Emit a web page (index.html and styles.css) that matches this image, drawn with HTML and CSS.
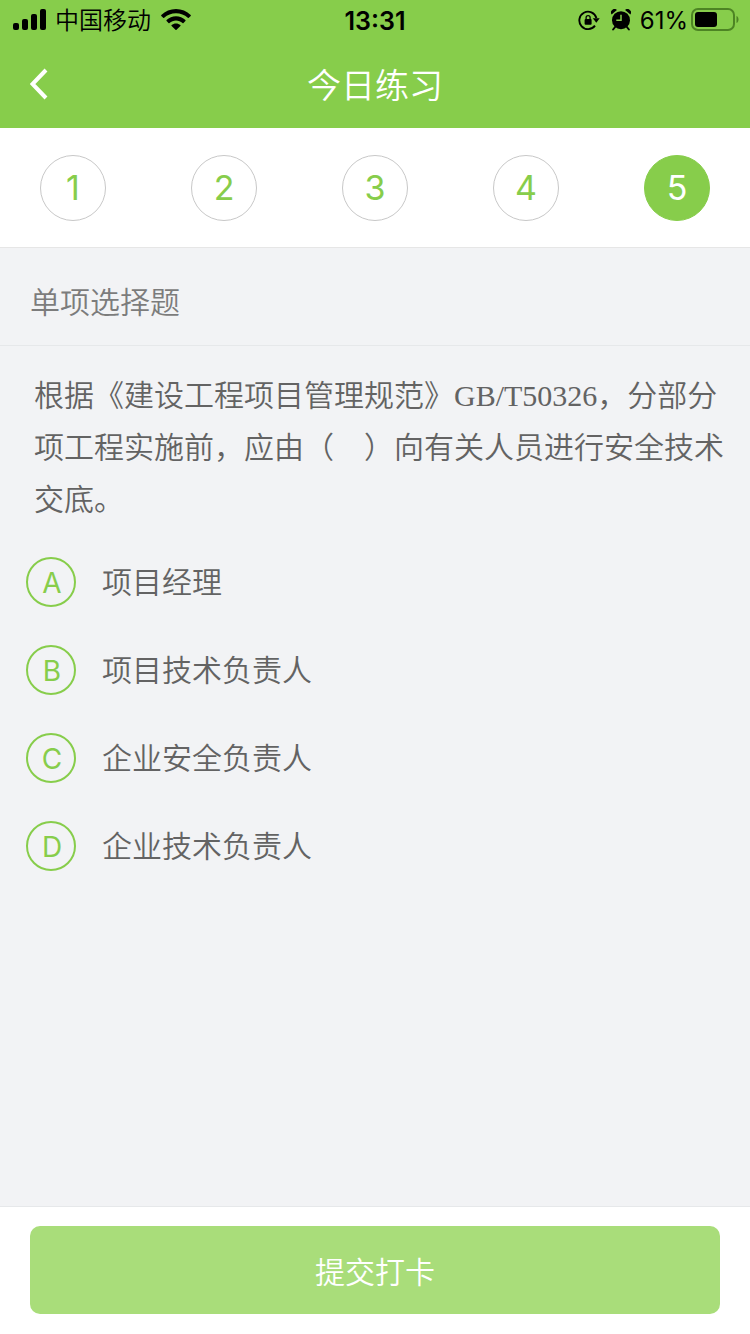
FILE: index.html
```html
<!DOCTYPE html>
<html lang="zh-CN">
<head>
<meta charset="utf-8">
<meta name="viewport" content="width=device-width, initial-scale=1">
<title>今日练习</title>
<link rel="stylesheet" href="styles.css">
</head>
<body>
<div class="app">
  <div class="status">
    <div class="status-left">
      <svg class="signal" width="34" height="22" viewBox="0 0 34 22" aria-hidden="true">
        <rect x="0" y="14" width="6" height="7" rx="2"/>
        <rect x="9" y="10" width="6" height="11" rx="2"/>
        <rect x="18" y="5" width="6" height="16" rx="2"/>
        <rect x="27" y="0" width="6" height="21" rx="2"/>
      </svg>
      <span>中国移动</span>
      <svg class="wifi" width="30" height="22" viewBox="0 0 30 22" aria-hidden="true">
        <path d="M15 0C9.400 0 4.200 2.200.300 5.900c-.3.300-.3.700 0 1l1.900 1.900c.3.300.7.300 1 0C6.400 5.800 10.500 4.300 15 4.300s8.600 1.500 11.800 4.500c.3.300.7.300 1 0l1.900-1.900c.3-.3.300-.7 0-1C25.800 2.200 20.600 0 15 0z"/>
        <path d="M15 7.300c-3.600 0-6.900 1.400-9.400 3.700-.3.300-.3.700 0 1l1.900 1.900c.3.300.7.300 1 0 1.800-1.600 4.100-2.500 6.500-2.500s4.700.9 6.500 2.500c.3.300.7.300 1 0l1.900-1.900c.3-.3.300-.7 0-1-2.500-2.300-5.800-3.700-9.400-3.700z"/>
        <path d="M15 14.400c-1.700 0-3.200.6-4.400 1.600-.3.300-.3.700 0 1l3.900 3.800c.3.300.7.300 1 0l3.900-3.800c.3-.3.300-.7 0-1-1.200-1-2.700-1.600-4.400-1.600z"/>
      </svg>
    </div>
    <time class="clock">13:31</time>
    <div class="status-right">
      <svg width="22" height="22" viewBox="0 0 22 22" aria-hidden="true">
        <path d="M17 16.600A8.700 8.700 0 1 1 18.400 9" fill="none" stroke="#000" stroke-width="1.900"/>
        <path d="M14.800 9.300h6.900l-3.400 4.500z"/>
        <rect x="6.600" y="10" width="7" height="5.800" rx="1"/>
        <path d="M8.100 10.500V8.600a2 2 0 0 1 4 0v1.900" fill="none" stroke="#000" stroke-width="1.300"/>
      </svg>
      <svg class="alarm" width="20" height="22" viewBox="0 0 20 22" aria-hidden="true">
        <circle cx="10" cy="11.200" r="9"/>
        <path d="M.6 5.500A3.500 3.500 0 0 1 5.900 1zM19.400 5.500A3.500 3.500 0 0 0 14.100 1z"/>
        <path d="M4.500 17.500l-2.400 3M15.500 17.500l2.400 3" stroke="#000" stroke-width="2" stroke-linecap="round"/>
        <path class="hands" d="M10 5.800v5.500H5.300"/>
      </svg>
      <span class="percent">61%</span>
      <svg class="battery" width="48" height="24" viewBox="0 0 48 24" aria-hidden="true">
        <rect class="shell" x="1" y="1" width="42" height="21" rx="6"/>
        <rect x="4" y="4" width="22" height="15" rx="3"/>
        <path class="cap" d="M45.500 8c1.500.6 2 2 2 3.500s-.5 2.900-2 3.500z"/>
      </svg>
    </div>
  </div>
  <header class="nav">
    <button class="back" type="button" aria-label="返回">
      <svg width="18" height="32" viewBox="0 0 18 32" aria-hidden="true"><path d="M16 2L2.500 16L16 30"/></svg>
    </button>
    <h1>今日练习</h1>
  </header>
  <nav class="steps" aria-label="题号">
    <button class="step" type="button">1</button>
    <button class="step" type="button">2</button>
    <button class="step" type="button">3</button>
    <button class="step" type="button">4</button>
    <button class="step current" type="button" aria-current="step">5</button>
  </nav>
  <main>
    <h2>单项选择题</h2>
    <fieldset>
      <legend>根据《建设工程项目管理规范》GB/T50326，分部分项工程实施前，应由（　）向有关人员进行安全技术交底。</legend>
      <div class="options">
        <label class="option"><input type="radio" name="answer" value="A"><span class="letter">A</span><span class="text">项目经理</span></label>
        <label class="option"><input type="radio" name="answer" value="B"><span class="letter">B</span><span class="text">项目技术负责人</span></label>
        <label class="option"><input type="radio" name="answer" value="C"><span class="letter">C</span><span class="text">企业安全负责人</span></label>
        <label class="option"><input type="radio" name="answer" value="D"><span class="letter">D</span><span class="text">企业技术负责人</span></label>
      </div>
    </fieldset>
  </main>
  <footer>
    <button class="submit" type="button">提交打卡</button>
  </footer>
</div>
</body>
</html>
```
FILE: styles.css
```css
* { box-sizing: border-box; }

body {
  margin: 0;
  background: #f2f3f5;
  color: #636363;
  font-family: Inter, "Noto Sans CJK SC", sans-serif;
  font-weight: 350;
}

button { margin: 0; padding: 0; border: 0; font: inherit; }
svg { display: block; flex: none; }

.app {
  display: flex;
  flex-direction: column;
  min-height: 100vh;
}

.status {
  display: grid;
  grid-template-columns: 1fr auto 1fr;
  align-items: center;
  height: 40px;
  padding: 0 11px;
  background: #87cd4b;
  color: #000;
  font-size: 24px;
  line-height: 38px;
}

.status span, .clock { padding-top: 2px; }
.status-left, .status-right { display: flex; align-items: center; }
.status-right { justify-content: flex-end; }
.signal { margin: 0 8px 0 2px; }
.wifi { margin-left: 10px; }
.clock { font-size: 25px; font-weight: 600; }
.percent { font-weight: 400; }
.alarm { margin: 0 9px 0 11px; }
.battery { margin-left: 3px; }
.hands { fill: none; stroke: #87cd4b; stroke-width: 1.500; }
.shell { fill: none; stroke: #4d8424; stroke-width: 2; }
.cap { fill: #4d8424; }

.nav {
  display: grid;
  grid-template-columns: 78px 1fr 78px;
  height: 88px;
  background: #87cd4b;
  color: #fff;
}

.back {
  display: grid;
  place-items: center;
  background: none;
}

.back path { fill: none; stroke: #fff; stroke-width: 4; }

h1 {
  margin: 0;
  padding-top: 4px;
  font-size: 34px;
  font-weight: 350;
  line-height: 84px;
  text-align: center;
}

.steps {
  display: flex;
  justify-content: space-between;
  padding: 27px 40px 26px;
  border-bottom: 1px solid #e6e6e6;
  background: #fff;
}

.step {
  width: 66px;
  height: 66px;
  border: 1px solid #c8c8c8;
  border-radius: 50%;
  background: #fff;
  color: #87cd4b;
  font-size: 34px;
  font-weight: 400;
  line-height: 64px;
}

.step.current {
  border-color: #87cd4b;
  background: #87cd4b;
  color: #fff;
}

main { flex: 1; }

h2 {
  margin: 0;
  padding: 12px 30px 0;
  border-bottom: 1px solid #e6e8ea;
  color: #7c7c7c;
  font-size: 30px;
  font-weight: 350;
  line-height: 85px;
}

fieldset {
  min-width: 0;
  margin: 0;
  padding: 24px 26px;
  border: 0;
}

legend {
  float: left;
  width: 100%;
  padding: 0 0 0 8px;
  font-family: "Liberation Serif", "Noto Sans CJK SC", serif;
  font-size: 30px;
  line-height: 52px;
  text-spacing-trim: space-all;
}

.options {
  display: flex;
  flex-direction: column;
  gap: 38px;
  clear: both;
  padding-top: 31px;
}

.option {
  display: grid;
  grid-template-columns: 50px 1fr;
  column-gap: 26px;
  align-items: center;
  font-size: 30px;
  line-height: 50px;
}

.option input {
  grid-area: 1 / 1;
  width: 50px;
  height: 50px;
  margin: 0;
  border: 2px solid #87cd4b;
  border-radius: 50%;
  appearance: none;
}

.option input:checked { background: #87cd4b; }
.option input:checked + .letter { color: #fff; }

.letter {
  grid-area: 1 / 1;
  padding: 2px 0 0 2px;
  color: #87cd4b;
  font-size: 28px;
  font-weight: 400;
  line-height: 48px;
  text-align: center;
}

footer {
  padding: 19px 30px 20px;
  border-top: 1px solid #e6e8ea;
  background: #fff;
}

.submit {
  width: 100%;
  height: 88px;
  border-radius: 10px;
  background: #a9dd7a;
  color: #fff;
  font-size: 30px;
}
```
